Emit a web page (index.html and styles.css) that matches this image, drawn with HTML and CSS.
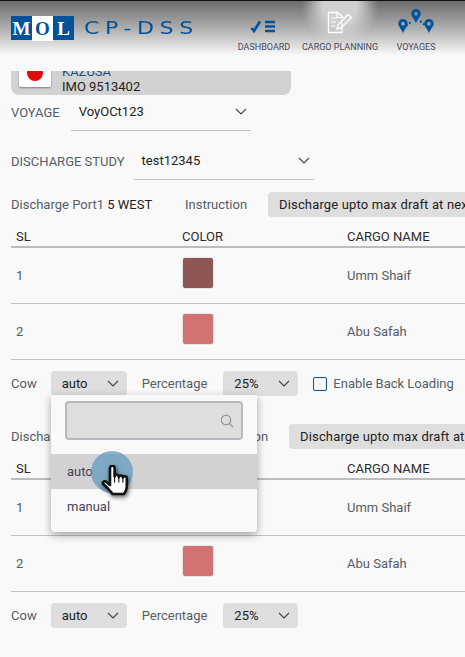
FILE: index.html
```html
<!DOCTYPE html>
<html lang="en">
<head>
    <meta charset="UTF-8">
    <meta name="viewport" content="width=device-width, initial-scale=1.0">
    <title>CP-DSS - Discharge Study</title>
    <link rel="stylesheet" href="styles.css">
</head>
<body>
    <svg class="icon-defs" width="0" height="0">
        <symbol id="chevron" viewBox="0 0 12 7">
            <path d="M1 1l5 5 5-5" fill="none" stroke="currentColor" stroke-width="1.2"/>
        </symbol>
        <symbol id="pin" viewBox="0 0 10 15">
            <path d="M5 0a5 5 0 0 1 5 5c0 3-3 5-5 10C3 10 0 8 0 5a5 5 0 0 1 5-5zm0 3a2 2 0 1 0 0 4 2 2 0 0 0 0-4z" fill="#00529b" fill-rule="evenodd"/>
        </symbol>
    </svg>

    <header class="topbar">
        <div class="brand">
            <div class="logo"><span>M</span><span class="logo-o">O</span><span>L</span></div>
            <div class="brand-name">CP-DSS</div>
        </div>
        <nav class="nav">
            <a class="nav-item">
                <svg class="nav-icon" width="28" height="14" viewBox="0 0 28 14">
                    <path d="M1.5 8l2.5 3L10 1.5" fill="none" stroke="#00529b" stroke-width="2.6"/>
                    <path d="M15 2h10M15 6.5h10M15 11h10" stroke="#00529b" stroke-width="2.4"/>
                </svg>
                <span>DASHBOARD</span>
            </a>
            <a class="nav-item active">
                <svg class="nav-icon" width="26" height="23" viewBox="0 0 26 23">
                    <path d="M15 12v9.500H1.500V1.500h9l6 5" fill="none" stroke="#fff" stroke-width="1.300"/>
                    <path d="M10 1.500v5h6M4 7h6M4 11h5M4 15h4" fill="none" stroke="#fff" stroke-width="1.200"/>
                    <path d="M10 18l1-4L21 3.500l3.500 3L14 17z" fill="none" stroke="#fff" stroke-width="1.300"/>
                </svg>
                <span>CARGO PLANNING</span>
            </a>
            <a class="nav-item">
                <svg class="nav-icon" width="36" height="25" viewBox="0 0 36 25">
                    <use href="#pin" x="13" y="0" width="10" height="14"/>
                    <use href="#pin" x="0" y="10" width="10" height="14"/>
                    <use href="#pin" x="26" y="10" width="10" height="14"/>
                    <path d="M8 17l6-5M22 12l6 5" fill="none" stroke="#00529b" stroke-width="2" stroke-dasharray="2 2"/>
                </svg>
                <span>VOYAGES</span>
            </a>
        </nav>
    </header>

    <main class="content">
        <div class="ship-card">
            <div class="flag"><span class="flag-sun"></span></div>
            <div class="ship-info">
                <div class="ship-name">KAZUSA</div>
                <div>IMO 9513402</div>
            </div>
        </div>

        <div class="field-row">
            <label class="label">VOYAGE</label>
            <div class="underline-select voyage-select">
                <span>VoyOCt123</span>
                <svg class="chevron"><use href="#chevron"/></svg>
            </div>
        </div>

        <div class="field-row study-row">
            <label class="label">DISCHARGE STUDY</label>
            <div class="underline-select study-select">
                <span>test12345</span>
                <svg class="chevron"><use href="#chevron"/></svg>
            </div>
        </div>

        <section class="port">
            <div class="port-row">
                <div class="port-info"><span class="label">Discharge Port1</span> <span class="port-name">5 WEST</span></div>
                <span class="label">Instruction</span>
                <div class="pill">Discharge upto max draft at next port</div>
            </div>
            <table class="cargo-table">
                <thead>
                    <tr><th class="col-sl">SL</th><th class="col-color">COLOR</th><th>CARGO NAME</th></tr>
                </thead>
                <tbody>
                    <tr><td>1</td><td><div class="swatch swatch-brown"></div></td><td>Umm Shaif</td></tr>
                    <tr><td>2</td><td><div class="swatch swatch-pink"></div></td><td>Abu Safah</td></tr>
                </tbody>
            </table>
            <div class="cow-row">
                <span class="label">Cow</span>
                <div class="chip chip-cow">auto <svg class="chevron"><use href="#chevron"/></svg></div>
                <span class="label">Percentage</span>
                <div class="chip chip-pct">25% <svg class="chevron"><use href="#chevron"/></svg></div>
                <label class="check"><span class="checkbox"></span><span class="label">Enable Back Loading</span></label>
            </div>

            <div class="dropdown">
                <div class="search">
                    <svg width="14" height="14" viewBox="0 0 14 14">
                        <circle cx="6" cy="6" r="4.700" fill="none" stroke="#8a9096" stroke-width="1.100"/>
                        <path d="M9.500 9.500l3.500 3.500" stroke="#8a9096" stroke-width="1.100"/>
                    </svg>
                </div>
                <div class="option selected">auto</div>
                <div class="option">manual</div>
                <div class="click-mark"></div>
                <svg class="hand" width="32" height="34" viewBox="0 0 32 34">
                    <path d="M9 3a2.300 2.300 0 0 1 4.600 0v8.500a2.100 2.100 0 0 1 4.200.500 2.100 2.100 0 0 1 4.100.800 2 2 0 0 1 3.900 1v6.700c0 4-2 7.500-3 8.500H11.500c-1.500-2-3-3.500-5-6L2.200 19c-1-1.500 1-3.500 3-2.300L9 20z" fill="#fff" stroke="#111" stroke-width="2.600" stroke-linejoin="round"/>
                    <path d="M13.600 11.500v6M17.800 12v5.500M21.900 13.800v4" stroke="#111" stroke-width="1.100"/>
                </svg>
            </div>
        </section>

        <section class="port port-second">
            <div class="port-row">
                <div class="port-info port-info-wide"><span class="label">Discharge Port2</span></div>
                <span class="label">Instruction</span>
                <div class="pill">Discharge upto max draft at next port</div>
            </div>
            <table class="cargo-table">
                <thead>
                    <tr><th class="col-sl">SL</th><th class="col-color">COLOR</th><th>CARGO NAME</th></tr>
                </thead>
                <tbody>
                    <tr><td>1</td><td><div class="swatch swatch-brown"></div></td><td>Umm Shaif</td></tr>
                    <tr><td>2</td><td><div class="swatch swatch-pink"></div></td><td>Abu Safah</td></tr>
                </tbody>
            </table>
            <div class="cow-row">
                <span class="label">Cow</span>
                <div class="chip chip-cow">auto <svg class="chevron"><use href="#chevron"/></svg></div>
                <span class="label">Percentage</span>
                <div class="chip chip-pct">25% <svg class="chevron"><use href="#chevron"/></svg></div>
            </div>
        </section>
    </main>
</body>
</html>
```

FILE: styles.css
```css
html, body {
    height: 100%;
}
body {
    margin: 0;
    font-family: Roboto, Arial, sans-serif;
    font-size: 13px;
    color: #222;
    background-color: #f9f9f9;
    overflow: hidden;
}
.icon-defs {
    position: absolute;
}

/* header */
.topbar {
    height: 71px;
    box-sizing: border-box;
    border-top: 1px solid #111;
    background: linear-gradient(#6c6c6c, #b5b5b5 30px, #f9f9f9 54px);
    display: flex;
    justify-content: space-between;
}
.brand {
    display: flex;
    align-items: flex-start;
    padding: 15px 0 0 11px;
}
.logo {
    width: 63px;
    height: 24px;
    background-color: #00529b;
    display: grid;
    grid-template-columns: 21px 21px 21px;
    font-family: "Liberation Serif", serif;
    font-weight: bold;
    font-size: 19px;
    line-height: 25px;
    text-align: center;
    color: #fff;
}
.logo-o {
    background-color: #fff;
    color: #00529b;
}
.brand-name {
    margin: 3px 0 0 10px;
    font-family: "DejaVu Sans", sans-serif;
    font-size: 17px;
    line-height: 18px;
    letter-spacing: 4.300px;
    color: #00529b;
    transform: scaleX(1.3);
    transform-origin: left center;
}
.nav {
    display: flex;
    padding-right: 11px;
}
.nav-item {
    height: 54px;
    box-sizing: border-box;
    display: flex;
    flex-direction: column;
    align-items: center;
    justify-content: flex-end;
    padding-bottom: 3px;
    font-size: 9px;
    color: #43495c;
    white-space: nowrap;
    width: 76px;
}
.nav-icon {
    margin-bottom: 8px;
}
.nav-item.active {
    background: radial-gradient(ellipse 38px 44px at 50% 4px, #d0d0d0 45%, rgba(208, 208, 208, 0) 100%);
}

/* ship */
.ship-card {
    width: 280px;
    height: 24px;
    margin-left: 11px;
    background-color: #d2d2d2;
    border-radius: 0 0 8px 8px;
    overflow: hidden;
    display: flex;
    align-items: flex-end;
    padding-bottom: 0;
}
.flag {
    width: 32px;
    height: 28px;
    margin: 0 11px 8px 8px;
    background-color: #fff;
    border-radius: 2px;
    box-shadow: 0 1px 2px rgba(0, 0, 0, 0.4);
    display: flex;
    justify-content: center;
    align-items: center;
    flex-shrink: 0;
}
.flag-sun {
    width: 16px;
    height: 16px;
    border-radius: 50%;
    background-color: #e00b0b;
}
.ship-info {
    line-height: 15px;
    padding-bottom: 1px;
}
.ship-name {
    color: #1d4f86;
}

/* fields */
.label {
    color: #565d66;
}
.field-row {
    display: flex;
    margin: 0 0 0 11px;
    align-items: center;
    height: 36px;
}
.field-row .label {
    margin-bottom: 2px;
}
.underline-select {
    width: 180px;
    height: 36px;
    box-sizing: border-box;
    border-bottom: 1px solid #c2c2c2;
    display: flex;
    justify-content: space-between;
    align-items: center;
    padding: 0 4px 2px 8px;
    flex-shrink: 0;
}
.voyage-select {
    margin-left: 11px;
}
.study-select {
    margin-left: 9px;
}
.study-row {
    margin-top: 13px;
}
.chevron {
    width: 12px;
    height: 7px;
    color: #444;
    flex-shrink: 0;
}

/* port sections */
.port {
    position: relative;
    padding-left: 11px;
    margin-top: 12px;
}
.port-second {
    margin-top: 28px;
}
.port-row {
    display: flex;
    align-items: center;
    height: 25px;
}
.port-info {
    width: 174px;
    flex-shrink: 0;
    white-space: nowrap;
}
.port-info-wide {
    width: 195px;
}
.pill {
    margin-left: 21px;
    height: 25px;
    line-height: 25px;
    padding: 0 11px;
    border-radius: 4px;
    background-color: #dedede;
    white-space: nowrap;
    flex-shrink: 0;
    letter-spacing: 0.15px;
}
.cargo-table {
    width: 454px;
    border-collapse: collapse;
    table-layout: fixed;
    margin-top: 7px;
}
.cargo-table th {
    font-weight: normal;
    text-align: left;
    height: 20px;
    padding: 2px 0 0 5px;
    border-bottom: 2px solid #bdbdbd;
    color: #2c2c2c;
}
.cargo-table th.col-sl {
    width: 161px;
}
.cargo-table th.col-color {
    width: 160px;
}
.cargo-table td {
    height: 55px;
    padding: 0 0 0 5px;
    border-bottom: 1px solid #c2c2c2;
    color: #565d66;
}
.cargo-table td:nth-child(2) {
    padding-left: 6px;
}
.swatch {
    width: 30px;
    height: 30px;
    margin-bottom: 5px;
    border-radius: 2px;
    box-shadow: 0 0 0 1px #e8e4e4;
}
.swatch-brown {
    background-color: #8f5656;
}
.swatch-pink {
    background-color: #d27373;
}
.cow-row {
    display: flex;
    align-items: center;
    margin-top: 11px;
    height: 25px;
}
.chip {
    height: 25px;
    box-sizing: border-box;
    display: flex;
    align-items: center;
    justify-content: space-between;
    padding: 0 8px 0 11px;
    background-color: #dedede;
    border-radius: 4px;
}
.chip-cow {
    width: 76px;
    margin-left: 14px;
    margin-right: 15px;
}
.chip-pct {
    width: 75px;
    margin-left: 16px;
}
.check {
    display: flex;
    align-items: center;
    margin-left: 15px;
}
.checkbox {
    width: 12px;
    height: 12px;
    border: 1px solid #0a5298;
    border-radius: 2px;
    margin-right: 6px;
}

/* dropdown over second section */
.dropdown {
    position: absolute;
    left: 51px;
    top: 203px;
    width: 206px;
    height: 137px;
    box-sizing: border-box;
    background-color: #f9f9f9;
    border-radius: 0 0 4px 4px;
    box-shadow: 0 3px 8px rgba(0, 0, 0, 0.35);
    padding-top: 6px;
    z-index: 2;
}
.search {
    width: 178px;
    height: 39px;
    box-sizing: border-box;
    margin: 0 0 14px 14px;
    background-color: #dedede;
    border: 2px solid #b6babe;
    border-radius: 4px;
    display: flex;
    align-items: center;
    justify-content: flex-end;
    padding-right: 7px;
}
.option {
    height: 35px;
    line-height: 35px;
    padding-left: 16px;
    color: #4a3f5c;
}
.option.selected {
    background-color: #d2d2d2;
}
.click-mark {
    position: absolute;
    left: 40px;
    top: 56px;
    width: 42px;
    height: 42px;
    border-radius: 50%;
    background-color: rgba(90, 150, 190, 0.7);
}
.hand {
    position: absolute;
    left: 50px;
    top: 70px;
    filter: drop-shadow(1px 2px 2px rgba(0, 0, 0, 0.6));
}
```
